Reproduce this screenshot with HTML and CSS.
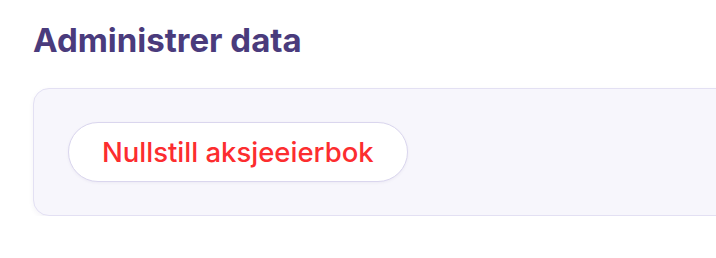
FILE: index.html
```html
<!DOCTYPE html>
<html lang="no">

<head>
    <meta charset="UTF-8">
    <meta name="viewport" content="width=device-width, initial-scale=1.0">
    <title>Administrer data</title>
    <link rel="stylesheet" href="styles.css">
</head>

<body>
    <div class="container">
        <h2 class="title">Administrer data</h2>
        <div class="panel">
            <button class="btn-danger">Nullstill aksjeeierbok</button>
        </div>
    </div>
</body>

</html>
```

FILE: styles.css
```css
body {
    margin: 0;
    overflow: hidden;
    background-color: #ffffff;
    font-family: Inter, "Noto Sans", sans-serif;
}

.container {
    padding: 20px 0 0 33px;
    width: 800px;
}

.title {
    margin: 0 0 28px 0;
    font-size: 33px;
    font-weight: 700;
    line-height: 40px;
    color: #4a3b7c;
}

.panel {
    display: flex;
    align-items: center;
    padding: 33px 34px;
    background-color: #f7f6fc;
    border: 1.5px solid #e3e0f3;
    border-radius: 16px;
    box-shadow: 0 2px 5px rgba(60, 50, 120, 0.06);
}

.btn-danger {
    height: 60px;
    padding: 0 33px;
    background-color: #ffffff;
    border: 1.5px solid #dad6ee;
    border-radius: 30px;
    box-shadow: 0 1px 3px rgba(60, 50, 120, 0.06);
    font-family: Inter, "Noto Sans", sans-serif;
    font-size: 27.5px;
    font-weight: 500;
    color: #fc2d2f;
    cursor: pointer;
}
```
